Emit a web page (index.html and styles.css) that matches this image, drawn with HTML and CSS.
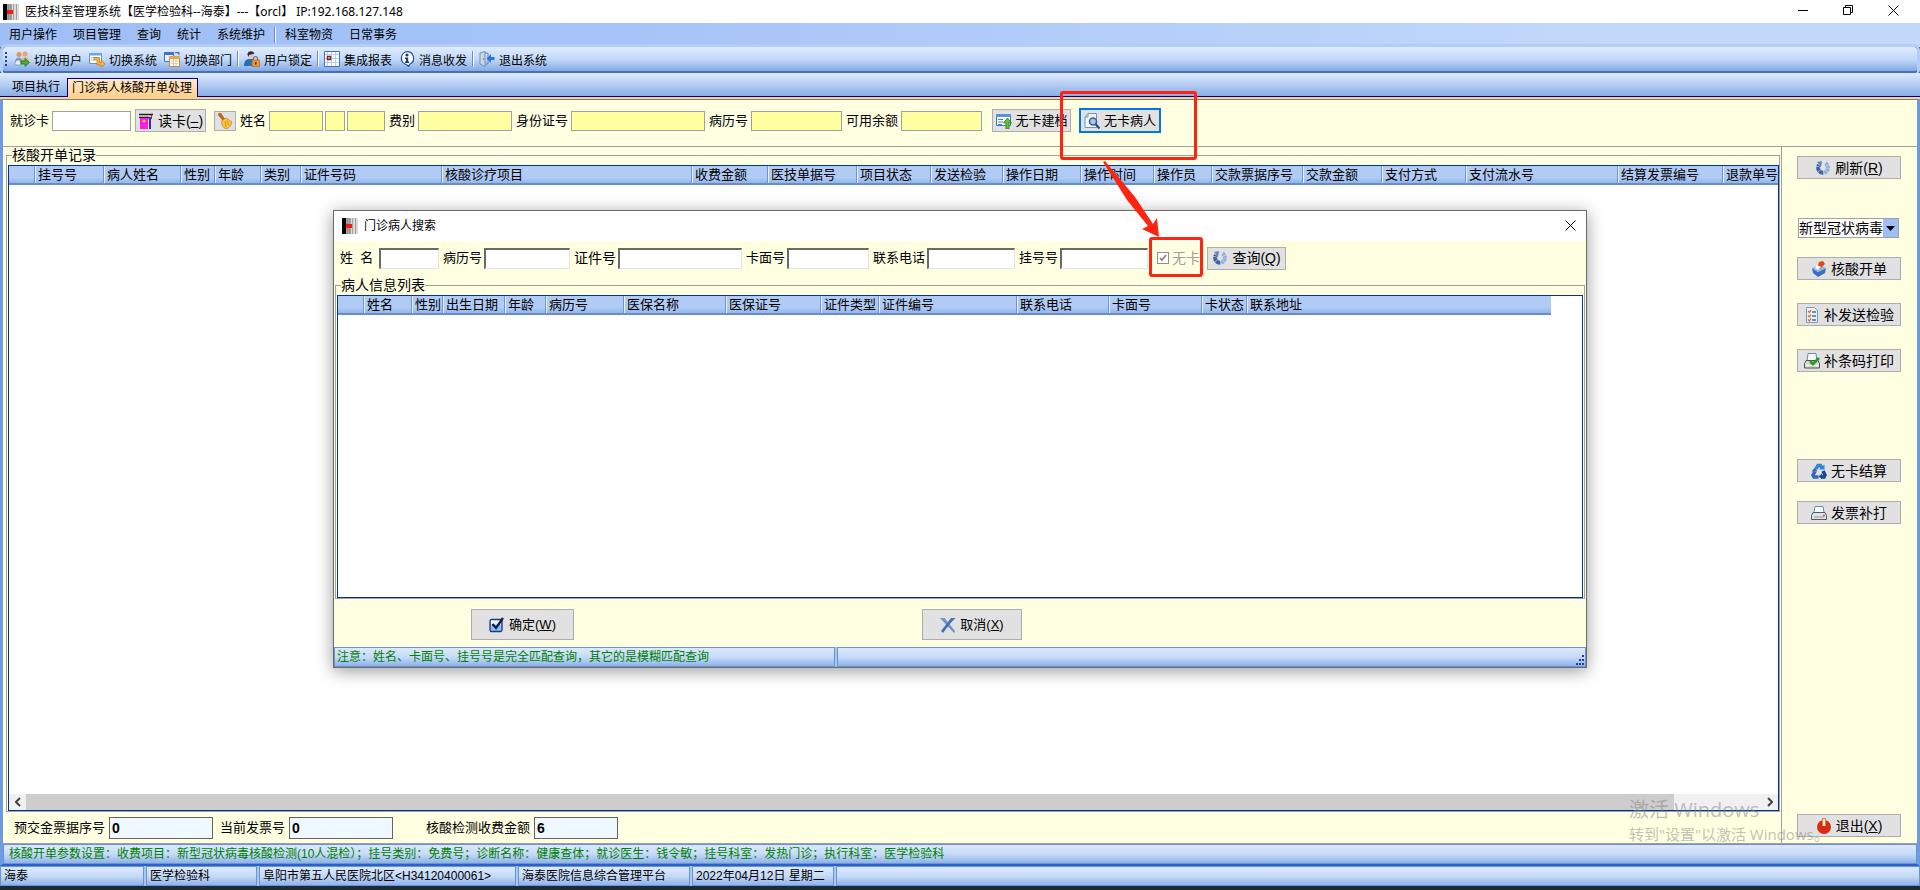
FILE: index.html
```html
<!DOCTYPE html>
<html lang="zh-CN">
<head>
  <meta charset="UTF-8">
  <title>医技科室管理系统</title>
  <link rel="stylesheet" href="styles.css">
</head>
<body>

  <!-- 公用图标 -->
  <svg class="sprite" aria-hidden="true">
    <symbol id="logo" viewBox="0 0 16 16">
      <rect width="16" height="16" fill="#dcd9d9"/>
      <rect x="4" width="5" height="16" fill="#a8a4a4"/>
      <rect width="4" height="16" fill="#000"/>
      <path d="M5.5 0v16M7.5 0v16M10.5 0v16M13.5 0v16" stroke="#8a8686" stroke-width=".7"/>
      <rect x="4" y="6" width="6" height="4" fill="#f21b12"/>
    </symbol>
    <symbol id="spin" viewBox="0 0 16 16">
      <g fill="none" stroke-width="4">
        <path d="M10.5 3.500A5 5 0 0 1 8 12.800" stroke="#8fb0da" stroke-dasharray="2.500 .5"/>
        <path d="M8 12.800A5 5 0 0 1 4 5" stroke="#3c65a8" stroke-dasharray="4 .4"/>
      </g>
      <path d="M2 2l5-1-1 6z" fill="#5f86c0"/>
    </symbol>
  </svg>

  <header class="titlebar">
    <svg class="icon"><use href="#logo"/></svg>
    <span class="title">医技科室管理系统【医学检验科--海泰】---【orcl】 IP:192.168.127.148</span>
    <button class="win-btn" aria-label="最小化"><svg width="11" height="11"><path d="M0 5.500h10" stroke="#000"/></svg></button>
    <button class="win-btn" aria-label="还原"><svg width="11" height="11" fill="none" stroke="#000"><path d="M.5 2.500h7v7h-7zM2.500 2.500v-2h7v7h-2"/></svg></button>
    <button class="win-btn" aria-label="关闭"><svg width="11" height="11"><path d="M.5.5l10 10M10.500.5l-10 10" stroke="#000"/></svg></button>
  </header>

  <nav class="menubar">
    <a href="#">用户操作</a>
    <a href="#">项目管理</a>
    <a href="#">查询</a>
    <a href="#">统计</a>
    <a href="#">系统维护</a>
    <span class="sep"></span>
    <a href="#">科室物资</a>
    <a href="#">日常事务</a>
  </nav>

  <div class="toolbar">
    <span class="grip"></span>
    <button>
      <svg class="icon" viewBox="0 0 16 16"><circle cx="5" cy="3.500" r="2.500" fill="#d9975c"/><circle cx="11" cy="3" r="2.500" fill="#e2a56c"/><path d="M1 11c0-6 7-6 8 0z" fill="#7c9cc9"/><path d="M8 8c2-3 6-2 7 1v2H8z" fill="#e8b080"/><path d="M1 12c1-4 5-4 6 0v2H1z" fill="#e3ecf7" stroke="#6b84ad" stroke-width=".6"/><path d="M7 10h4V7.500l4.500 4L11 15.500V13H7z" fill="#4caf3a" stroke="#23731a" stroke-width=".8"/></svg>
      切换用户
    </button>
    <button>
      <svg class="icon" viewBox="0 0 16 16"><path d="M.5 2.500h12v10H.5z" fill="#fff" stroke="#5d8fd8"/><path d="M.5 2h12v2.500H.5z" fill="#6ba3ea"/><path d="M2 6.500h6M2 9h4" stroke="#9cc0ee"/><path d="M5 6.500h5.500v5H12V9l4 4-4 3.500V14H8V9H5z" fill="#f7b23b" stroke="#c0761a" stroke-width=".7"/></svg>
      切换系统
    </button>
    <button>
      <svg class="icon" viewBox="0 0 16 16"><path d="M.5 1.500h9v9h-9z" fill="#eaf3ff" stroke="#3f73c4"/><path d="M0 1h10v3H0z" fill="#3f73c4"/><path d="M5.500 5.500h10v10h-10z" fill="#fff" stroke="#cf8233"/><path d="M5 5h11v3H5z" fill="#f0a04b"/><path d="M7 10h7M7 12.500h7M9.500 8v7M12 8v7" stroke="#d8b48c" stroke-width=".7"/><path d="M11 1.500h4v2M13 1l2 2.500" stroke="#2d66bd" fill="none"/></svg>
      切换部门
    </button>
    <span class="sep"></span>
    <button>
      <svg class="icon" viewBox="0 0 16 16"><path d="M4 3c0-4 6-4 6 0 0 4-1 5-3 5S4 7 4 3z" fill="#e9c8b0"/><path d="M3.500 4C3-.5 9-1 10.500 2.500L9 3l-4 1v2z" fill="#2e2a5c"/><path d="M0 15c0-7 4-7 7-7s6 1 6 7z" fill="#2a6cb8"/><path d="M9.500 9V7.500c0-2.500 4-2.500 4 0V9" fill="none" stroke="#777" stroke-width="1.300"/><path d="M8 9h7.500v6.500H8z" fill="#e9953a" stroke="#a35d17" stroke-width=".6"/><path d="M11.700 11v2.500" stroke="#5b2f06" stroke-width="1.500"/></svg>
      用户锁定
    </button>
    <span class="sep"></span>
    <button>
      <svg class="icon" viewBox="0 0 16 16"><path d="M.5.500h15v15H.5z" fill="#fff" stroke="#3d6fc4"/><path d="M1 3.500h14M1 7.500h14M1 11.500h14M3.500 1v14M7.500 1v14M11.500 1v14" stroke="#a9c4ee" stroke-width=".8"/><path d="M3.500 5.500h3v3h-3z" fill="none" stroke="#8c2414" stroke-width="1.500"/></svg>
      集成报表
    </button>
    <button>
      <svg class="icon" viewBox="0 0 16 16"><path d="M8 .7a6.500 6.500 0 0 1 3 12.300L9.500 15.500 7.500 13.500A6.500 6.500 0 0 1 8 .7z" fill="#fff" stroke="#27509c" stroke-width="1.200"/><circle cx="8" cy="4" r="1.600" fill="#16408f"/><path d="M6 6.500h3.200v4h1V12H6v-1.500h1V8H6z" fill="#16408f"/></svg>
      消息收发
    </button>
    <span class="sep"></span>
    <button>
      <svg class="icon" viewBox="0 0 16 16"><path d="M1 2l5-1.500v15L1 13z" fill="#c7d8ec" stroke="#6a86b0" stroke-width=".9"/><path d="M6 2h3v11H6" fill="none" stroke="#6a86b0"/><circle cx="4.500" cy="8" r=".9" fill="#d98c28"/><path d="M15.500 6H12V3L7.500 7.500 12 12V9h3.500z" fill="#1f7bd8"/></svg>
      退出系统
    </button>
  </div>

  <div class="tabs">
    <a href="#" class="tab">项目执行</a>
    <a href="#" class="tab active">门诊病人核酸开单处理</a>
  </div>

  <main class="workspace">

    <!-- 病人信息 -->
    <form class="patient-bar">
      <label for="card">就诊卡</label>
      <input type="text" id="card" class="w-79 white">
      <button type="button" class="btn read">
        <svg class="icon" viewBox="0 0 16 16"><path d="M1 1.500h14M1 4.500h10" stroke="#222" stroke-width="1.300"/><path d="M2 5h8v11H2z" fill="#ff19e8"/><path d="M4 8l2-1.500L8 8 6 10z" fill="#ffd400"/><path d="M10 4h3v12h-2V7z" fill="#2b2bd0"/><path d="M13.500 2v4" stroke="#e01010"/></svg>
        读卡(<u>–</u>)
      </button>
      <button type="button" class="btn clear" aria-label="清空">
        <svg class="icon" viewBox="0 0 16 16"><path d="M1.500 0l2.500 0 4 6-2.500 1.500L1 2z" fill="#b9691d"/><path d="M5 7.500L9 5l6 4c-1 4-3 6-6 7C6 15 4 11 5 7.500z" fill="#fcc43c" stroke="#c07e15" stroke-width=".7"/><path d="M8 8l1 6M10 7.500l2 5" stroke="#c98a1f" stroke-width=".8"/></svg>
      </button>
      <label for="pname">姓名</label>
      <input type="text" id="pname" class="w-54">
      <input type="text" class="w-20 tight" aria-label="性别">
      <input type="text" class="w-38 tight" aria-label="年龄">
      <label for="fee">费别</label>
      <input type="text" id="fee" class="w-94">
      <label for="idno">身份证号</label>
      <input type="text" id="idno" class="w-134">
      <label for="record">病历号</label>
      <input type="text" id="record" class="w-91">
      <label for="balance">可用余额</label>
      <input type="text" id="balance" class="w-81">
      <button type="button" class="btn new-file">
        <svg class="icon" viewBox="0 0 16 16"><path d="M.5 1.500h14v11H.5z" fill="#fff" stroke="#3e78cc"/><path d="M0 1h15v3H0z" fill="#5c93df"/><path d="M2 6.500h5M2 9h5M2 11.500h4M3 2.500h2M7 2.500h2" stroke="#4b84d4"/><path d="M11.500 5l4 5H13v6h-3v-6H7.500z" fill="#61c22f" stroke="#2c7d10" stroke-width=".8"/></svg>
        无卡建档
      </button>
      <button type="button" class="btn no-card">
        <svg class="icon" viewBox="0 0 16 16"><path d="M4 .5h8.500v14H1V4z" fill="#f4f8fd" stroke="#6d94c8"/><path d="M4 .5V4H1" fill="none" stroke="#6d94c8"/><circle cx="9" cy="8.500" r="3.500" fill="#a9c8ea" stroke="#3c5f94" stroke-width="1.600"/><path d="M11.500 11l4 4.500" stroke="#2b4a86" stroke-width="2.200"/></svg>
        无卡病人
      </button>
    </form>

    <div class="work-body">
      <div class="records">
        <fieldset class="group">
          <legend>核酸开单记录</legend>
          <div class="grid">
            <table class="orders">
              <thead>
                <tr>
                  <th></th><th>挂号号</th><th>病人姓名</th><th>性别</th><th>年龄</th><th>类别</th><th>证件号码</th>
                  <th>核酸诊疗项目</th><th>收费金额</th><th>医技单据号</th><th>项目状态</th><th>发送检验</th>
                  <th>操作日期</th><th>操作时间</th><th>操作员</th><th>交款票据序号</th><th>交款金额</th>
                  <th>支付方式</th><th>支付流水号</th><th>结算发票编号</th><th>退款单号</th>
                </tr>
              </thead>
            </table>
            <div class="hscroll">
              <button aria-label="向左"><svg width="6" height="10"><path d="M5 1L1 5l4 4" fill="none" stroke="#444" stroke-width="2"/></svg></button>
              <div class="track"><div class="thumb"></div></div>
              <button aria-label="向右"><svg width="6" height="10"><path d="M1 1l4 4-4 4" fill="none" stroke="#444" stroke-width="2"/></svg></button>
            </div>
          </div>
        </fieldset>

        <div class="totals">
          <label for="prepay">预交金票据序号</label>
          <input type="text" id="prepay" value="0">
          <label for="invoice">当前发票号</label>
          <input type="text" id="invoice" value="0">
          <label for="amount" class="far">核酸检测收费金额</label>
          <input type="text" id="amount" class="small" value="6">
        </div>
      </div>

      <aside class="actions">
        <button class="btn"><svg class="icon"><use href="#spin"/></svg>刷新(<u>R</u>)</button>
        <select class="item" aria-label="检验项目"><option>新型冠状病毒</option></select>
        <button class="btn"><svg class="icon" viewBox="0 0 16 16"><path d="M1 7l6 4 8-4-1 5-7 4-5-4z" fill="#3a6fc2"/><path d="M1 7l7-3 7 3-8 4z" fill="#8db6ea"/><path d="M8 1l4-1 2 3-5 5-3-1z" fill="#e0461e"/><path d="M6 4l4 2-3 3-3-2z" fill="#fff"/></svg>核酸开单</button>
        <button class="btn"><svg class="icon" viewBox="0 0 16 16"><path d="M2.500 .5h8l3 3v12h-11z" fill="#e8f2fc" stroke="#7d99b8"/><path d="M4 4l1.500 1.500L7 3M4 8.500L5.500 10 7 7.500M4 12.500L5.500 14 7 11.500" fill="none" stroke="#dc6a28" stroke-width="1.300"/><path d="M8 5h4M8 9h4M8 13h4" stroke="#3a6fa8" stroke-width="1.300"/></svg>补发送检验</button>
        <button class="btn"><svg class="icon" viewBox="0 0 16 16"><path d="M4 .5h8l1 8H3z" fill="#f4f9ff" stroke="#6a8bc0"/><path d="M2 7.500h12l1.500 3v4.500H.5v-4.500z" fill="#d9d9d4" stroke="#55554f"/><path d="M2 12.500h12" stroke="#fff"/><path d="M6 8l3 3 6-6" fill="none" stroke="#2f9b1c" stroke-width="2.800"/></svg>补条码打印</button>
        <button class="btn settle"><svg class="icon" viewBox="0 0 16 16"><g fill="none" stroke-width="3.500"><path d="M5 6l2-3.500h2.500L11 5" stroke="#2f86dd"/><path d="M4 8.500L2 12l1 2h4.500" stroke="#3564bb"/><path d="M12 8l2 4-1 2h-3" stroke="#1a4699"/></g><path d="M8 6.500h5.500V1.500z" fill="#2f86dd"/><path d="M11 10.500V16L7.500 13.500z" fill="#1a4699"/><path d="M.5 8.500h6L4 4.500z" fill="#3564bb"/></svg>无卡结算</button>
        <button class="btn"><svg class="icon" viewBox="0 0 16 16"><path d="M4 1.500h8l1 6H3z" fill="#fff" stroke="#6d8cc0"/><path d="M2 7.500h12l1.500 3v4H.5v-4z" fill="#e2e2de" stroke="#4c5878"/><path d="M3 12h10" stroke="#999"/><circle cx="13" cy="10.500" r="1" fill="#e33"/></svg>发票补打</button>
        <button class="btn exit"><svg class="icon" viewBox="0 0 16 16"><circle cx="8" cy="9" r="7" fill="#d92b16"/><path d="M6 0h4v8H6z" fill="#f07b3c"/><path d="M7 1h2v7H7z" fill="#fff3d8"/></svg>退出(<u>X</u>)</button>
      </aside>
    </div>

    <div class="param-line">核酸开单参数设置：收费项目：新型冠状病毒核酸检测(10人混检）；挂号类别：免费号；诊断名称：健康查体；就诊医生：钱令敏；挂号科室：发热门诊；执行科室：医学检验科</div>
  </main>

  <footer class="statusbar">
    <span class="s-user">海泰</span>
    <span class="s-dept">医学检验科</span>
    <span class="s-hosp">阜阳市第五人民医院北区&lt;H34120400061&gt;</span>
    <span class="s-plat">海泰医院信息综合管理平台</span>
    <span class="s-date">2022年04月12日 星期二</span>
    <span class="s-rest"></span>
  </footer>

  <!-- 门诊病人搜索 -->
  <section class="dialog" role="dialog" aria-labelledby="dlg-title">
    <div class="dialog-title">
      <svg class="icon"><use href="#logo"/></svg>
      <span class="title" id="dlg-title">门诊病人搜索</span>
      <button class="close" aria-label="关闭"><svg width="11" height="11"><path d="M.5.5l10 10M10.500.5l-10 10" stroke="#000"/></svg></button>
    </div>

    <form class="search-bar">
      <label for="q-name" class="wide">姓&nbsp; 名</label>
      <input type="text" id="q-name" class="w-60">
      <label for="q-record">病历号</label>
      <input type="text" id="q-record" class="w-86">
      <label for="q-id" class="big">证件号</label>
      <input type="text" id="q-id" class="w-124">
      <label for="q-face">卡面号</label>
      <input type="text" id="q-face" class="w-82">
      <label for="q-tel">联系电话</label>
      <input type="text" id="q-tel" class="w-88">
      <label for="q-reg">挂号号</label>
      <input type="text" id="q-reg" class="w-88">
      <label class="check"><input type="checkbox" checked disabled>无卡</label>
      <button type="button" class="btn query"><svg class="icon"><use href="#spin"/></svg>查询(<u>Q</u>)</button>
    </form>

    <fieldset class="group">
      <legend>病人信息列表</legend>
      <div class="grid">
        <table class="patients">
          <thead>
            <tr>
              <th></th><th>姓名</th><th>性别</th><th>出生日期</th><th>年龄</th><th>病历号</th><th>医保名称</th>
              <th>医保证号</th><th>证件类型</th><th>证件编号</th><th>联系电话</th><th>卡面号</th><th>卡状态</th><th>联系地址</th>
            </tr>
          </thead>
        </table>
      </div>
    </fieldset>

    <div class="dialog-buttons">
      <button class="btn ok"><svg class="icon" viewBox="0 0 16 16"><rect x="1" y="2.500" width="12" height="12" rx="1.500" fill="#8fbdf2" stroke="#1d3a78" stroke-width="1.300"/><path d="M2 3.500h10v4H2z" fill="#eaf4ff"/><path d="M3.500 7l3.500 4L14 1" fill="none" stroke="#0d1c40" stroke-width="2.200"/></svg>确定(<u>W</u>)</button>
      <button class="btn cancel"><svg class="icon" viewBox="0 0 16 16"><path d="M0 1h4.500L15 14l-1 2z" fill="#6a94cf"/><path d="M15.500 1L11 1 1 14l2 2C7 11 10 6 15.500 1z" fill="#4670b4"/></svg>取消(<u>X</u>)</button>
    </div>

    <div class="dialog-status">
      <span class="hint">注意：姓名、卡面号、挂号号是完全匹配查询，其它的是模糊匹配查询</span>
      <span class="rest"><svg width="9" height="11" fill="#1f3b9b"><path d="M6 0h2v2H6zM6 4h2v2H6zM3 4h2v2H3zM6 8h2v2H6zM3 8h2v2H3zM0 8h2v2H0z"/></svg></span>
    </div>
  </section>

  <!-- 标注 -->
  <div class="mark mark-button"></div>
  <div class="mark mark-check"></div>
  <svg class="arrow" viewBox="0 0 58 78"><path d="M0 1L2 0 32 36 50 63 54 57 56 76 39 68 45 65 24 39z" fill="#ff2412"/></svg>

  <div class="watermark">
    <div class="wm-title">激活 Windows</div>
    <div class="wm-text">转到"设置"以激活 Windows。</div>
  </div>

</body>
</html>
```

FILE: styles.css
```css
* {
  box-sizing: border-box;
}

body {
  margin: 0;
  height: 100vh;
  display: flex;
  flex-direction: column;
  overflow: hidden;
  position: relative;
  background: #1c2a3c;
  color: #000;
  font-family: "Liberation Sans", "Noto Sans CJK SC", sans-serif;
  font-size: 12px;
  line-height: 16px;
}

button, input, select {
  font-family: inherit;
  color: inherit;
}

a {
  color: inherit;
  text-decoration: none;
}

.sprite {
  display: none;
}

.icon {
  width: 16px;
  height: 16px;
  flex: none;
}

/* title bar */
.titlebar {
  display: flex;
  align-items: center;
  height: 23px;
  padding: 0 4px 0 3px;
  background: #fff;
  flex: none;
}

.title {
  flex: 1;
  margin-left: 6px;
  font-family: "Noto Sans", "Noto Sans CJK SC", sans-serif;
}

.win-btn {
  width: 45px;
  height: 22px;
  padding: 0;
  border: none;
  background: none;
}

/* menu and toolbar */
.menubar {
  display: flex;
  align-items: center;
  height: 24px;
  padding-left: 9px;
  gap: 16px;
  background: linear-gradient(to right, #9ebef5 0%, #a6c4f7 33%, #c3d9fb 85%);
  flex: none;
}

.menubar .sep {
  margin: 0 -7px;
}

.sep {
  width: 2px;
  height: 16px;
  border-left: 1px solid #6a8ccb;
  border-right: 1px solid #fff;
}

.toolbar {
  display: flex;
  align-items: center;
  height: 26px;
  margin: 0 3px;
  gap: 7px;
  padding-left: 2px;
  background: linear-gradient(#dfecfe, #c3daf9 50%, #84a9e5);
  border-bottom: 2px solid #4a6fb5;
  border-radius: 3px;
  box-shadow: 0 0 0 3px #b3cdf7;
  flex: none;
}

.toolbar .sep {
  margin: 0 -2px;
}

.toolbar button {
  display: flex;
  align-items: center;
  gap: 4px;
  padding: 0;
  border: none;
  background: none;
  font-size: 12px;
}

.grip {
  width: 2px;
  height: 14px;
  border-left: 2px dotted #27418c;
}

/* tabs */
.tabs {
  display: flex;
  align-items: flex-end;
  height: 26px;
  padding-left: 4px;
  background: linear-gradient(#dfecfe, #85abe6);
  border-bottom: 2px solid #ffcf8d;
  box-shadow: inset 0 -1px #000080;
  flex: none;
}

.tab {
  height: 19px;
  padding: 1px 7px 0 8px;
}

.tab.active {
  padding: 1px 5px 0 4px;
  border: 1px solid #000080;
  border-bottom: none;
  background: linear-gradient(#ffe9c9, #ffcf8d);
}

/* workspace */
.workspace {
  flex: 1;
  min-height: 0;
  display: flex;
  flex-direction: column;
  background: #ffffe1;
  border: 3px solid #6e9ae4;
  border-top: 1px solid #808080;
  border-bottom: 2px solid #2a62c8;
}

.patient-bar {
  display: flex;
  align-items: center;
  height: 47px;
  padding: 0 7px 5px;
  gap: 4px;
  border-bottom: 1px solid #a0a0a0;
  font-size: 13px;
  flex: none;
}

.patient-bar label,
.search-bar label,
.totals label {
  white-space: nowrap;
}

.patient-bar input {
  height: 20px;
  margin-left: -1px;
  padding: 0 2px;
  border: 1px solid #a0a0a0;
  background: #ffffa0;
}

.patient-bar input.white {
  background: #fff;
}

.patient-bar input.tight {
  margin-left: -2px;
}

.w-20 { width: 20px; }
.w-38 { width: 38px; }
.w-54 { width: 54px; }
.w-60 { width: 60px; }
.w-79 { width: 79px; }
.w-81 { width: 81px; }
.w-82 { width: 82px; }
.w-86 { width: 86px; }
.w-88 { width: 88px; }
.w-91 { width: 91px; }
.w-94 { width: 94px; }
.w-124 { width: 124px; }
.w-134 { width: 134px; }

.btn {
  display: flex;
  align-items: center;
  justify-content: center;
  height: 23px;
  padding: 0;
  border: 1px solid #adadad;
  background: #e1e1e1;
  font-size: 14px;
  line-height: 18px;
  white-space: nowrap;
}

.btn .icon {
  margin-right: 4px;
}

.btn.read {
  width: 71px;
}

.btn.clear {
  width: 22px;
  height: 20px;
  margin-left: 4px;
}

.btn.clear .icon {
  margin: 0;
}

.btn.new-file {
  width: 79px;
  margin-left: 6px;
  font-size: 13px;
}

.btn.no-card {
  width: 82px;
  height: 25px;
  margin-left: 4px;
  border: 2px solid #0078d7;
  font-size: 13px;
}

.work-body {
  flex: 1;
  min-height: 0;
  display: flex;
  border-bottom: 1px solid #a0a0a0;
}

.records {
  flex: 1;
  min-width: 0;
  display: flex;
  flex-direction: column;
  border-right: 1px solid #a0a0a0;
}

.group {
  flex: 1;
  min-width: 0;
  min-height: 0;
  display: flex;
  flex-direction: column;
  margin: 0 1px 0 3px;
  padding: 2px 0 0 1px;
  border: 1px solid #a0a0a0;
}

.group legend {
  margin-left: 4px;
  padding: 0;
  font-size: 14px;
}

.grid {
  flex: 1;
  min-height: 0;
  display: flex;
  flex-direction: column;
  align-items: flex-start;
  overflow: hidden;
  background: #fff;
  border: 1px solid #003399;
}

table {
  table-layout: fixed;
  border-collapse: separate;
  border-spacing: 0;
  font-size: 13px;
}

.orders {
  width: 1770px;
}

.patients {
  width: 1213px;
}

th {
  height: 19px;
  padding: 0 0 0 3px;
  overflow: hidden;
  text-align: left;
  font-weight: normal;
  white-space: nowrap;
  background: linear-gradient(#b0cbf4 70%, #94b5ea);
  border-bottom: 2px solid #6a8ccb;
  border-left: 1px solid #6a94dc;
  box-shadow: inset 1px 0 #e6f0ff;
}

th:first-child {
  border-left: none;
  box-shadow: none;
}

.orders th:nth-child(1) { width: 25px; }
.orders th:nth-child(2) { width: 69px; }
.orders th:nth-child(3) { width: 77px; }
.orders th:nth-child(4) { width: 34px; }
.orders th:nth-child(5) { width: 46px; }
.orders th:nth-child(6) { width: 40px; }
.orders th:nth-child(7) { width: 141px; }
.orders th:nth-child(8) { width: 250px; }
.orders th:nth-child(9) { width: 76px; }
.orders th:nth-child(10) { width: 89px; }
.orders th:nth-child(11) { width: 74px; }
.orders th:nth-child(12) { width: 72px; }
.orders th:nth-child(13) { width: 78px; }
.orders th:nth-child(14) { width: 73px; }
.orders th:nth-child(15) { width: 58px; }
.orders th:nth-child(16) { width: 91px; }
.orders th:nth-child(17) { width: 79px; }
.orders th:nth-child(18) { width: 84px; }
.orders th:nth-child(19) { width: 152px; }
.orders th:nth-child(20) { width: 105px; }
.orders th:nth-child(21) { width: 57px; }

.patients th:nth-child(1) { width: 25px; }
.patients th:nth-child(2) { width: 48px; }
.patients th:nth-child(3) { width: 31px; }
.patients th:nth-child(4) { width: 62px; }
.patients th:nth-child(5) { width: 41px; }
.patients th:nth-child(6) { width: 78px; }
.patients th:nth-child(7) { width: 102px; }
.patients th:nth-child(8) { width: 95px; }
.patients th:nth-child(9) { width: 58px; }
.patients th:nth-child(10) { width: 138px; }
.patients th:nth-child(11) { width: 92px; }
.patients th:nth-child(12) { width: 93px; }
.patients th:nth-child(13) { width: 45px; }
.patients th:nth-child(14) { width: 305px; }

.hscroll {
  display: flex;
  width: 100%;
  height: 16px;
  margin-top: auto;
  background: #f0f0f0;
}

.hscroll button {
  width: 17px;
  padding: 0;
  border: none;
  background: none;
  line-height: 10px;
}

.track {
  flex: 1;
}

.thumb {
  width: 95%;
  height: 100%;
  background: #cdcdcd;
}

.totals {
  display: flex;
  align-items: center;
  height: 31px;
  padding-left: 11px;
  gap: 4px;
  font-size: 13px;
  flex: none;
}

.totals input {
  width: 104px;
  height: 22px;
  padding: 0 2px;
  margin-right: 3px;
  border: 1px solid #646464;
  background: #f0f8ff;
  font-size: 14px;
  font-weight: bold;
}

.totals .small {
  width: 84px;
}

.totals .far {
  margin-left: 26px;
}

/* right hand buttons */
.actions {
  display: flex;
  flex-direction: column;
  width: 135px;
  padding: 9px 16px 6px 15px;
}

.actions .btn {
  margin-bottom: 23px;
  flex: none;
}

.item {
  height: 20px;
  margin: 16px 2px 19px 1px;
  padding: 0;
  border: 1px solid #a0a0a0;
  border-radius: 0;
  appearance: none;
  background: url("data:image/svg+xml,%3Csvg xmlns='http://www.w3.org/2000/svg' width='15' height='18'%3E%3Cpath fill='%239ebef5' d='M0 0h15v18H0z'/%3E%3Cpath d='M3 7h9l-4.500 5z'/%3E%3C/svg%3E") no-repeat right center #fff;
  font-size: 14px;
  line-height: 16px;
}

.actions .settle {
  margin-top: 64px;
  margin-bottom: 19px;
}

.actions .exit {
  margin-top: auto;
  margin-bottom: 0;
}

.param-line {
  height: 20px;
  padding-left: 5px;
  border: 1px solid #6a94cf;
  background: linear-gradient(#dbe9fd, #c6dbf8 50%, #8fb2e9);
  color: #008000;
  line-height: 18px;
  white-space: nowrap;
  flex: none;
}

/* bottom status bar */
.statusbar {
  display: flex;
  height: 20px;
  margin-bottom: 4px;
  gap: 2px;
  background: #a9c6f2;
  flex: none;
}

.statusbar span,
.dialog-status span {
  padding-left: 3px;
  border: 1px solid #6a94cf;
  background: linear-gradient(#dbe9fd, #c6dbf8 50%, #8fb2e9);
  line-height: 19px;
  white-space: nowrap;
}

.s-user { width: 144px; }
.s-dept { width: 111px; }
.s-hosp { width: 257px; }
.s-plat { width: 172px; }
.s-date { width: 142px; }
.s-rest { flex: 1; }

/* search dialog */
.dialog {
  position: absolute;
  left: 333px;
  top: 210px;
  width: 1254px;
  height: 458px;
  display: flex;
  flex-direction: column;
  background: #ffffe1;
  border: 1px solid #6b6b6b;
  box-shadow: 0 3px 16px rgba(0, 0, 0, 0.4);
}

.dialog-title {
  display: flex;
  align-items: center;
  height: 30px;
  padding: 0 8px;
  background: #fff;
  flex: none;
}

.close {
  padding: 0 2px;
  border: none;
  background: none;
}

.search-bar {
  display: flex;
  align-items: center;
  height: 36px;
  padding: 0 6px 2px;
  gap: 2px;
  font-size: 13px;
  flex: none;
}

.search-bar input[type="text"] {
  height: 21px;
  margin-right: 2px;
  border: 1px solid #e3e3e3;
  border-top: 2px solid #696969;
  border-left: 2px solid #696969;
  background: #fff;
}

.search-bar .wide {
  width: 37px;
}

.search-bar .big {
  font-size: 14px;
}

.check {
  display: flex;
  align-items: center;
  gap: 3px;
  margin-left: 5px;
  color: #a0a0a0;
  font-size: 14px;
}

.check input {
  width: 12px;
  height: 12px;
  margin: 0;
  appearance: none;
  border: 1px solid #909090;
  background: url("data:image/svg+xml,%3Csvg xmlns='http://www.w3.org/2000/svg' viewBox='0 0 10 10'%3E%3Cpath d='M2 5l2 2 4-5' fill='none' stroke='%23909090' stroke-width='2'/%3E%3C/svg%3E") #fff;
}

.query {
  width: 79px;
  margin-left: 5px;
}

.dialog .group {
  margin: 0 1px;
}

.dialog .grid {
  margin-right: 1px;
}

.dialog-buttons {
  display: flex;
  align-items: center;
  height: 48px;
  padding: 2px 0 0 137px;
  gap: 348px;
  border-top: 1px solid #fff;
  flex: none;
}

.dialog-buttons .btn {
  height: 31px;
  font-size: 13px;
}

.ok { width: 103px; }
.cancel { width: 100px; }

.dialog-status {
  display: flex;
  height: 20px;
  gap: 2px;
  background: #a9c6f2;
  flex: none;
}

.dialog-status .hint {
  width: 40%;
  padding-left: 2px;
  color: #008000;
}

.dialog-status .rest {
  flex: 1;
  display: flex;
  justify-content: flex-end;
  align-items: flex-end;
}

/* red marks over the page */
.mark {
  position: absolute;
  border: 3px solid #ff2412;
  border-radius: 3px;
}

.mark-button {
  left: 1060px;
  top: 91px;
  width: 137px;
  height: 69px;
}

.mark-check {
  left: 1149px;
  top: 237px;
  width: 54px;
  height: 40px;
}

.arrow {
  position: absolute;
  left: 1103px;
  top: 161px;
  width: 58px;
  height: 78px;
}

.watermark {
  position: absolute;
  left: 1629px;
  top: 797px;
  color: rgba(130, 130, 130, 0.5);
  font-family: "Open Sans", "Noto Sans CJK SC", sans-serif;
  pointer-events: none;
}

.wm-title {
  font-size: 20px;
  line-height: 26px;
}

.wm-text {
  font-size: 15px;
  line-height: 22px;
}
```
